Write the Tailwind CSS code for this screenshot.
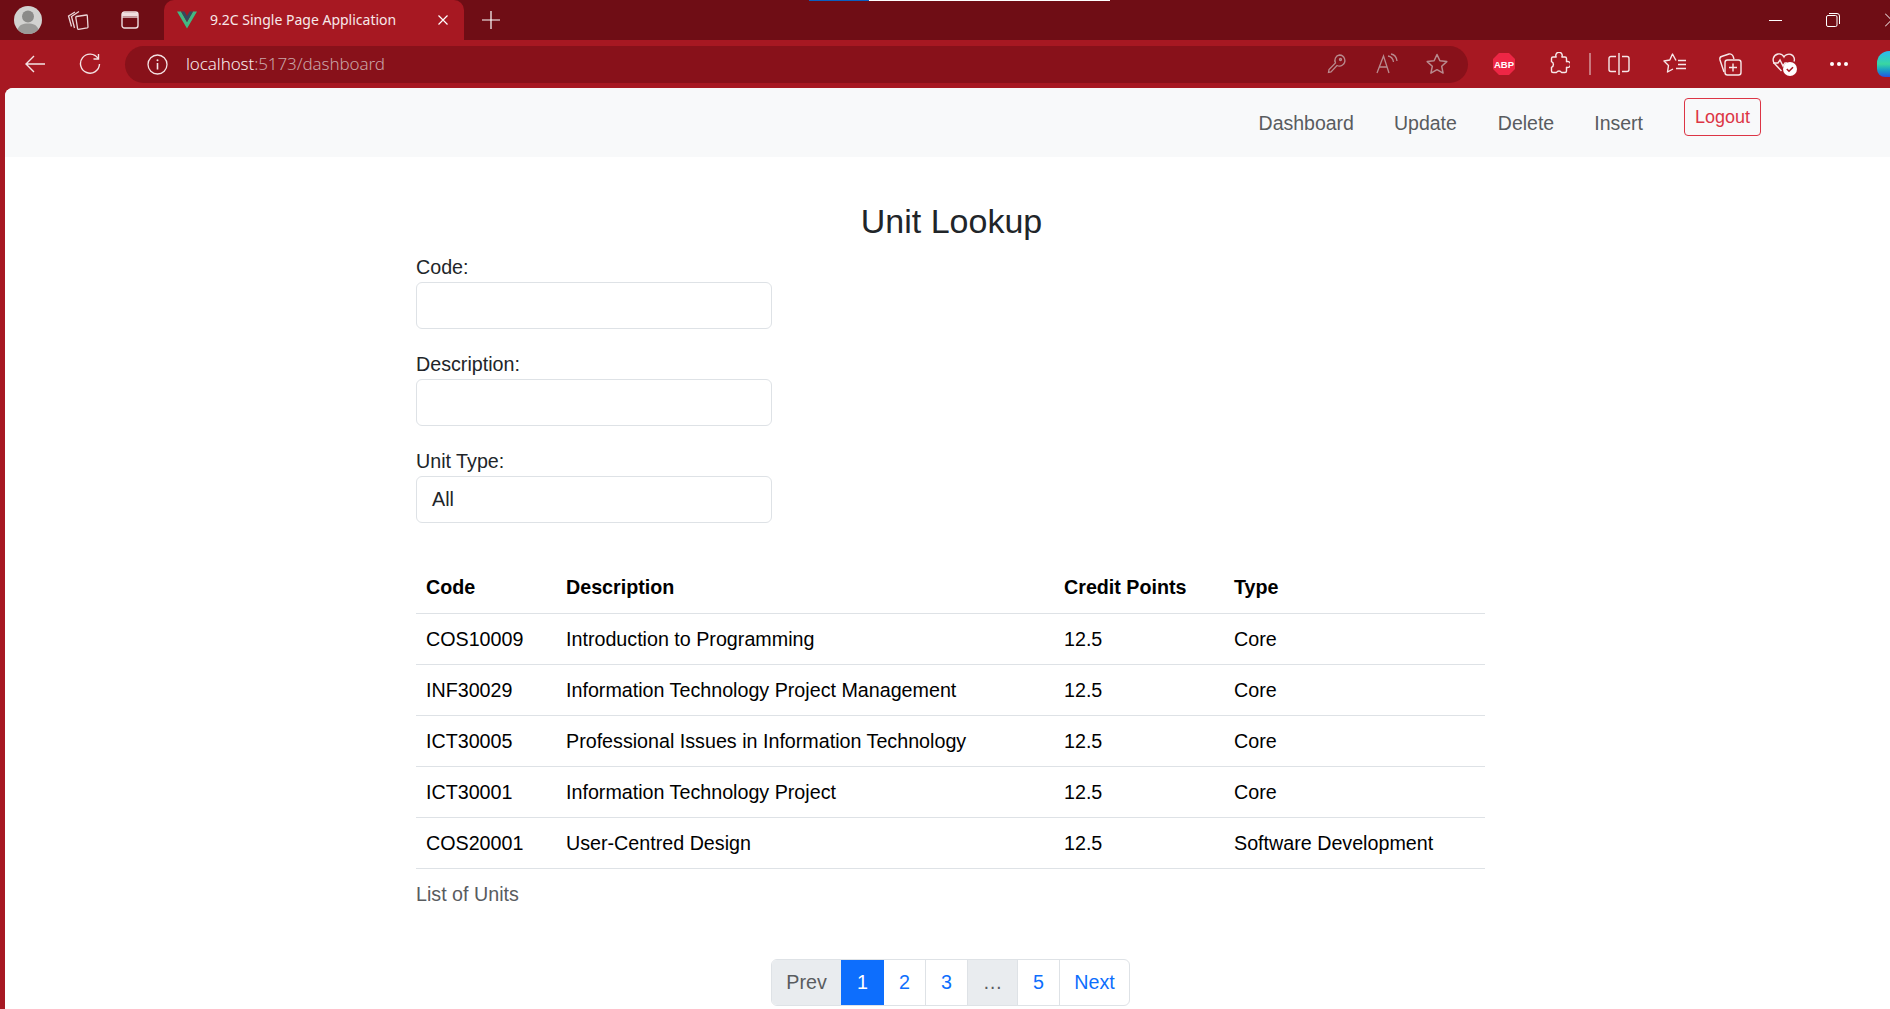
<!DOCTYPE html>
<html lang="en">
<head>
    <meta charset="UTF-8">
    <title>9.2C Single Page Application</title>
    <script src="https://cdn.jsdelivr.net/npm/@tailwindcss/browser@4"></script>
</head>
<body class="h-[1009px] overflow-hidden bg-[#a71822] font-['Liberation_Sans',Arial,sans-serif] text-[#212529]">

    <!-- tab strip -->
    <div class="relative flex h-[40px] items-center overflow-hidden bg-[#6f0d15] text-white">
        <div class="absolute left-[809px] top-0 flex h-[1px] w-[301px]">
            <div class="w-[60px] bg-[#0a5fc0]"></div>
            <div class="flex-1 bg-white"></div>
        </div>
        <div class="flex w-[56px] justify-center">
            <svg width="28" height="28" viewBox="0 0 28 28"><circle cx="14" cy="14" r="14" fill="#d2d2d0"/><circle cx="14" cy="10.5" r="6" fill="#8b8b89"/><path d="M3.5 23.5c1.5-4.5 5.5-6 10.5-6s9 1.500 10.500 6a14 14 0 0 1-21 0z" fill="#9b9b99"/></svg>
        </div>
        <div class="flex w-[44px] justify-center">
            <svg width="22" height="22" viewBox="0 0 22 22" fill="none" stroke="#ecd6d8" stroke-width="1.3"><path d="M4.500 17.500 1.500 7 8 3"/><path d="M7.500 19 4.500 7.500 12 2.500"/><path d="M9.500 7.500 19.500 6c.5 0 .8.300.8.800l.7 11.200c0 .5-.3.800-.8.900l-8.700 1.500c-.5 0-.8-.200-.9-.700L8.800 8.500c0-.5.200-.9.700-1z"/></svg>
        </div>
        <div class="flex w-[60px] justify-center">
            <svg width="18" height="18" viewBox="0 0 18 18" fill="none" stroke="#f0dfe0" stroke-width="1.400"><rect x="1" y="1" width="16" height="16" rx="2.500"/><path d="M1 3.500h16" stroke-width="4"/><path d="M1 6.200h16" stroke-width="1"/></svg>
        </div>
        <div class="ml-[4px] flex h-[40px] w-[300px] shrink-0 items-center rounded-t-[10px] bg-[#a71822]">
            <svg class="ml-[13px] shrink-0" width="20" height="18" viewBox="0 0 20 18"><path d="M0 0.500h4l6 10.500 6-10.500h4l-10 17z" fill="#42b883"/><path d="M4 0.500h3.500l2.500 4.500 2.500-4.500H16l-6 10.500z" fill="#35495e"/></svg>
            <span class="ml-[13px] -mt-[2px] w-[208px] whitespace-nowrap font-['Noto_Sans',sans-serif] text-[14px] text-[#f7e8e9]">9.2C Single Page Application</span>
            <svg class="ml-[19px]" width="12" height="12" viewBox="0 0 12 12" stroke="#fff" stroke-width="1.200"><path d="M1.500 1.500l9 9M10.500 1.500l-9 9"/></svg>
        </div>
        <div class="flex w-[54px] justify-center">
            <svg width="18" height="18" viewBox="0 0 18 18" stroke="#fff" stroke-width="1.200"><path d="M9 0v18M0 9h18"/></svg>
        </div>
        <div class="flex-1"></div>
        <div class="flex items-center">
            <div class="h-px w-[13px] bg-white"></div>
            <svg class="ml-[44px]" width="14" height="14" viewBox="0 0 14 14" fill="none" stroke="#fff" stroke-width="1"><rect x="0.500" y="2.500" width="10.500" height="11" rx="1.500"/><path d="M3 0.500h8a2.500 2.500 0 0 1 2.500 2.500v8"/></svg>
            <svg class="ml-[45px]" width="5" height="14" viewBox="0 0 5 14" fill="none" stroke="#fff" stroke-width="1"><path d="M0 0.500l6.500 6.500L0 13.500"/></svg>
        </div>
    </div>

    <!-- toolbar -->
    <div class="flex h-[48px] items-center overflow-hidden text-white">
        <div class="flex w-[70px] shrink-0 justify-center">
            <svg width="22" height="20" viewBox="0 0 22 20" fill="none" stroke="#f4e3e4" stroke-width="1.400"><path d="M21 10H2M10 2l-8 8 8 8"/></svg>
        </div>
        <div class="flex w-[40px] shrink-0 justify-center">
            <svg width="22" height="22" viewBox="0 0 22 22" fill="none" stroke="#f4e3e4" stroke-width="1.400"><path d="M19 5.500A9.500 9.500 0 1 0 20.500 11"/><path d="M19.500 1v5h-5"/></svg>
        </div>
        <div class="ml-[15px] flex h-[37px] w-[1343px] shrink-0 items-center rounded-full bg-[#88111a]">
            <svg class="ml-[22px]" width="21" height="21" viewBox="0 0 21 21" fill="none" stroke="#f4e3e4" stroke-width="1.300"><circle cx="10.500" cy="10.500" r="9.500"/><path d="M10.500 9v6.500" stroke-width="1.600"/><circle cx="10.500" cy="6.300" r="1" fill="#f4e3e4" stroke="none"/></svg>
            <span class="ml-[18px] whitespace-nowrap font-['Noto_Sans',sans-serif] text-[17px] font-light tracking-[-0.1px]"><span class="text-[#f7eaeb]">localhost</span><span class="text-[#c9a3a6]">:5173/dashboard</span></span>
            <div class="flex-1"></div>
            <svg width="20" height="22" viewBox="0 0 20 22" fill="none" stroke="#b98a8e" stroke-width="1.300"><path d="M12.500 2a5.500 5.500 0 0 1 3 10 5.500 5.500 0 0 1-5.500.5L4 19l-2.500.5.500-3 6.500-6.500A5.500 5.500 0 0 1 12.500 2z"/><circle cx="13.500" cy="6.500" r="1"/></svg>
            <svg class="ml-[29px]" width="22" height="22" viewBox="0 0 22 22" fill="none" stroke="#b98a8e" stroke-width="1.300"><path d="M1 20 7.500 3 13 20M3.500 14h8"/><path d="M12 3c3 .5 5 2.500 5.500 6M15 1c3 .5 5.500 3 6 7"/></svg>
            <svg class="ml-[28px] mr-[20px]" width="22" height="22" viewBox="0 0 22 22" fill="none" stroke="#b98a8e" stroke-width="1.500"><path d="M11 1.500l2.900 6.300 6.900.8-5.100 4.700 1.400 6.800L11 16.700l-6.100 3.400 1.400-6.800L1.200 8.600l6.900-.8z" stroke-linejoin="round"/></svg>
        </div>
        <svg class="ml-[24px] shrink-0" width="24" height="24" viewBox="0 0 24 24"><path d="M7 1h10l6 6v10l-6 6H7l-6-6V7z" fill="#ee2645"/><text x="12" y="16" text-anchor="middle" font-family="Liberation Sans" font-weight="700" font-size="9.500" fill="#fff">ABP</text></svg>
        <svg class="ml-[32px] shrink-0" width="22" height="24" viewBox="0 0 22 24" fill="none" stroke="#f7e8e9" stroke-width="1.400" stroke-linejoin="round"><path d="M3.500 6.500c0-1 .5-1.500 1.500-1.500h3.200a3.200 3.200 0 1 1 5.600 0H17c1 0 1.500.5 1.500 1.500v3.200a3 3 0 1 1 0 5.600V19c0 1-.5 1.500-1.500 1.500h-3.500a2.800 2.800 0 0 0-5 0H5c-1 0-1.500-.5-1.500-1.500v-3.700a3 3 0 0 0 0-5.600z"/></svg>
        <div class="ml-[19px] h-[22px] w-[2px] shrink-0 bg-[#c9777d]"></div>
        <svg class="ml-[17px] shrink-0" width="22" height="24" viewBox="0 0 22 24" fill="none" stroke="#f7e8e9" stroke-width="1.400"><path d="M11 1v22"/><path d="M8 4.500H3a2 2 0 0 0-2 2v11a2 2 0 0 0 2 2h5M14 4.500h5a2 2 0 0 1 2 2v11a2 2 0 0 1-2 2h-5"/></svg>
        <svg class="ml-[33px] shrink-0" width="24" height="24" viewBox="0 0 24 24" fill="none" stroke="#f7e8e9" stroke-width="1.400" stroke-linejoin="round"><path d="M13 8.500 9.500 2 6.800 8 1 9l4.500 4.500-1 6.500 5.500-3"/><path d="M15 8.500h8M15 12.500h8M13 16.500h10"/></svg>
        <svg class="ml-[31px] shrink-0" width="24" height="24" viewBox="0 0 24 24" fill="none" stroke="#f7e8e9" stroke-width="1.400"><path d="M6 20 2 8c-.5-2 0-3 1.500-3.500L11 2c2-.5 3 0 4 2l1 3"/><rect x="7" y="8" width="16" height="15" rx="2.500"/><path d="M15 11.500v8M11 15.500h8"/></svg>
        <svg class="ml-[30px] shrink-0" width="25" height="26" viewBox="0 0 25 26" fill="none" stroke="#f7e8e9" stroke-width="1.400"><path d="M9.500 20 2.500 12.500C0 9.500 1 4 6 3c3-.5 5 1 6 3 1-2 4-3.500 7-2.500 3 1 4 4.500 3 7"/><path d="M1 12h5l2-3 3 6 2-3h2"/><circle cx="18" cy="18" r="7" fill="#fff" stroke="none"/><path d="M14.800 18l2.200 2.200 4-4" stroke="#a71822" stroke-width="1.600"/></svg>
        <div class="ml-[30px] flex w-[24px] shrink-0 justify-center gap-[3px]">
            <div class="h-[4px] w-[4px] rounded-full bg-white"></div>
            <div class="h-[4px] w-[4px] rounded-full bg-white"></div>
            <div class="h-[4px] w-[4px] rounded-full bg-white"></div>
        </div>
        <div class="ml-[26px] h-[26px] w-[20px] shrink-0 rounded-l-[8px] rounded-tl-[12px] bg-gradient-to-b from-[#2fb8f0] via-[#3ad6a0] to-[#2a50e0]"></div>
    </div>

    <!-- page -->
    <div class="ml-[5px] h-[921px] overflow-hidden rounded-tl-[8px] bg-white">
        <nav class="flex h-[69px] justify-end bg-[#f8f9fa] pr-[129px] text-[19.500px] text-[#595c5f]">
            <a class="mt-[23px] leading-[24px]">Dashboard</a>
            <a class="ml-[40px] mt-[23px] leading-[24px]">Update</a>
            <a class="ml-[41px] mt-[23px] leading-[24px]">Delete</a>
            <a class="ml-[40px] mt-[23px] leading-[24px]">Insert</a>
            <button class="ml-[41px] mt-[10px] h-[38px] w-[77px] rounded-[4px] border border-[#dc3545] pt-[1px] text-[18px] text-[#dc3545]">Logout</button>
        </nav>

        <main class="ml-[411px] w-[1069px]">
            <h2 class="mt-[44px] pl-[2px] text-center text-[34px] leading-[40px]">Unit Lookup</h2>

            <form class="mt-[14px] w-[356px] text-[19.700px]">
                <label class="block h-[24px] leading-[24px]">Code:</label>
                <input type="text" class="mt-[3px] block h-[47px] w-full rounded-[6px] border border-[#dee2e6] bg-white">
                <label class="mt-[23px] block h-[24px] leading-[24px]">Description:</label>
                <input type="text" class="mt-[3px] block h-[47px] w-full rounded-[6px] border border-[#dee2e6] bg-white">
                <label class="mt-[23px] block h-[24px] leading-[24px]">Unit Type:</label>
                <div class="mt-[3px] flex h-[47px] w-full items-center rounded-[6px] border border-[#dee2e6] bg-white pl-[15px] pt-[1px]">All</div>
            </form>

            <table class="mt-[39px] w-full table-fixed border-collapse text-left text-[19.700px] text-black">
                <colgroup>
                    <col class="w-[140px]">
                    <col class="w-[498px]">
                    <col class="w-[170px]">
                    <col>
                </colgroup>
                <thead>
                    <tr class="h-[51px] border-b border-[#dee2e6]">
                        <th class="pl-[10px] pt-[2px] font-bold">Code</th>
                        <th class="pl-[10px] pt-[2px] font-bold">Description</th>
                        <th class="pl-[10px] pt-[2px] font-bold">Credit Points</th>
                        <th class="pl-[10px] pt-[2px] font-bold">Type</th>
                    </tr>
                </thead>
                <tbody>
                    <tr class="h-[51px] border-b border-[#dee2e6]">
                        <td class="pl-[10px] pt-[3px]">COS10009</td>
                        <td class="pl-[10px] pt-[3px]">Introduction to Programming</td>
                        <td class="pl-[10px] pt-[3px]">12.5</td>
                        <td class="pl-[10px] pt-[3px]">Core</td>
                    </tr>
                    <tr class="h-[51px] border-b border-[#dee2e6]">
                        <td class="pl-[10px] pt-[3px]">INF30029</td>
                        <td class="pl-[10px] pt-[3px]">Information Technology Project Management</td>
                        <td class="pl-[10px] pt-[3px]">12.5</td>
                        <td class="pl-[10px] pt-[3px]">Core</td>
                    </tr>
                    <tr class="h-[51px] border-b border-[#dee2e6]">
                        <td class="pl-[10px] pt-[3px]">ICT30005</td>
                        <td class="pl-[10px] pt-[3px]">Professional Issues in Information Technology</td>
                        <td class="pl-[10px] pt-[3px]">12.5</td>
                        <td class="pl-[10px] pt-[3px]">Core</td>
                    </tr>
                    <tr class="h-[51px] border-b border-[#dee2e6]">
                        <td class="pl-[10px] pt-[3px]">ICT30001</td>
                        <td class="pl-[10px] pt-[3px]">Information Technology Project</td>
                        <td class="pl-[10px] pt-[3px]">12.5</td>
                        <td class="pl-[10px] pt-[3px]">Core</td>
                    </tr>
                    <tr class="h-[51px] border-b border-[#dee2e6]">
                        <td class="pl-[10px] pt-[3px]">COS20001</td>
                        <td class="pl-[10px] pt-[3px]">User-Centred Design</td>
                        <td class="pl-[10px] pt-[3px]">12.5</td>
                        <td class="pl-[10px] pt-[3px]">Software Development</td>
                    </tr>
                </tbody>
            </table>
            <p class="mt-[13px] text-[19.700px] leading-[24px] text-[#595c5f]">List of Units</p>

            <div class="ml-[355px] mt-[53px] flex h-[47px] w-[359px] overflow-hidden rounded-[6px] border border-[#dee2e6] text-[19.700px] text-[#0d6efd]">
                <span class="flex w-[69px] items-center justify-center bg-[#e9ecef] pt-[2px] text-[#595c5f]">Prev</span>
                <span class="flex w-[43px] items-center justify-center bg-[#0d6efd] pt-[2px] text-white">1</span>
                <span class="flex w-[42px] items-center justify-center border-r border-[#dee2e6] pt-[2px]">2</span>
                <span class="flex w-[42px] items-center justify-center border-r border-[#dee2e6] pt-[2px]">3</span>
                <span class="flex w-[50px] items-center justify-center border-r border-[#dee2e6] bg-[#e9ecef] pt-[2px] text-[#595c5f]">…</span>
                <span class="flex w-[42px] items-center justify-center border-r border-[#dee2e6] pt-[2px]">5</span>
                <span class="flex flex-1 items-center justify-center pt-[2px]">Next</span>
            </div>
        </main>
    </div>

</body>
</html>
